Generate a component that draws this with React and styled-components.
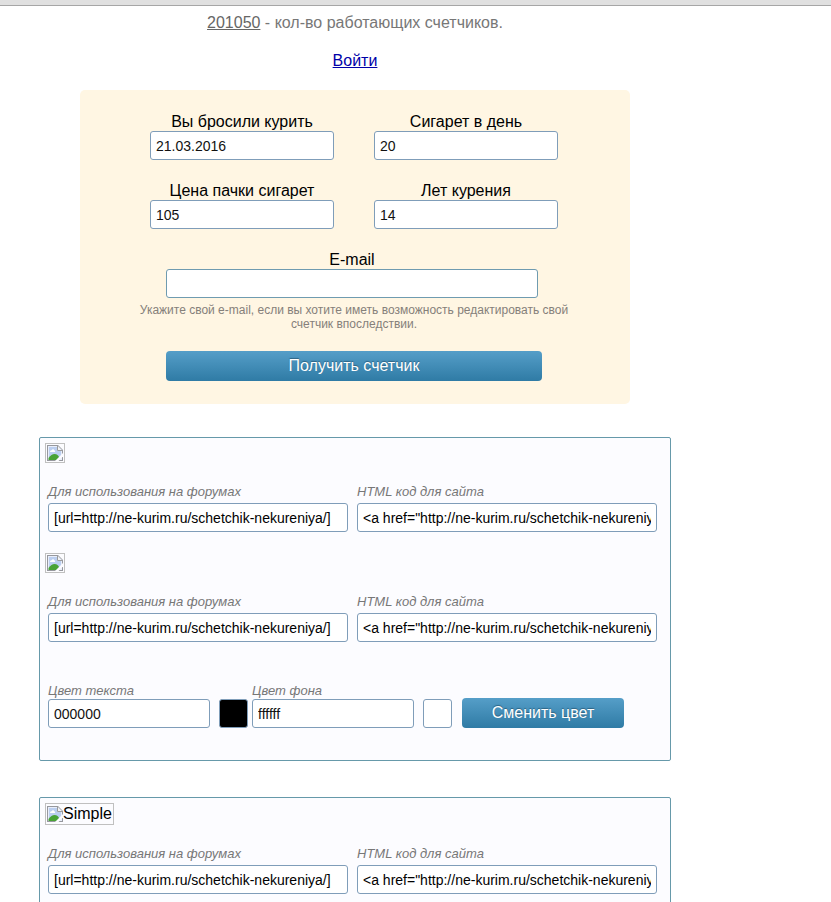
import React from 'react'
import styled, { createGlobalStyle } from 'styled-components'

const FORUM_CODE = '[url=http://ne-kurim.ru/schetchik-nekureniya/]'
const SITE_CODE = '<a href="http://ne-kurim.ru/schetchik-nekureniya/">'

export default function App() {
    return (
        <>
            <GlobalStyle />
            <TopBar />
            <Page>
                <Stats><a href="#counters">201050</a> - кол-во работающих счетчиков.</Stats>
                <Login><a href="#login">Войти</a></Login>
                <CounterForm />
                <Panel>
                    <CodeBlock id="large" />
                    <CodeBlock id="small" />
                    <ColorForm />
                </Panel>
                <Panel>
                    <CodeBlock id="simple" alt="Simple" />
                </Panel>
            </Page>
        </>
    )
}

function CounterForm() {
    return (
        <Card onSubmit={e => e.preventDefault()}>
            <Fields>
                <Field id="quit-date" caption="Вы бросили курить" value="21.03.2016" />
                <Field id="per-day" caption="Сигарет в день" value="20" />
                <Field id="price" caption="Цена пачки сигарет" value="105" />
                <Field id="years" caption="Лет курения" value="14" />
            </Fields>
            <EmailBlock>
                <Label htmlFor="email">E-mail</Label>
                <EmailInput id="email" type="email" />
            </EmailBlock>
            <Hint>Укажите свой e-mail, если вы хотите иметь возможность редактировать свой счетчик впоследствии.</Hint>
            <SubmitButton type="submit">Получить счетчик</SubmitButton>
        </Card>
    )
}

function Field({ id, caption, value }) {
    return (
        <FieldBox>
            <Label htmlFor={id}>{caption}</Label>
            <Input id={id} type="text" defaultValue={value} />
        </FieldBox>
    )
}

function CodeBlock({ id, alt }) {
    return (
        <section>
            <Preview>
                <BrokenImage />
                {alt}
            </Preview>
            <Codes>
                <FieldBox>
                    <SmallLabel $gap="3px" htmlFor={`${id}-forum`}>Для использования на форумах</SmallLabel>
                    <CodeInput id={`${id}-forum`} type="text" readOnly value={FORUM_CODE} />
                </FieldBox>
                <FieldBox>
                    <SmallLabel $gap="3px" htmlFor={`${id}-site`}>HTML код для сайта</SmallLabel>
                    <CodeInput id={`${id}-site`} type="text" readOnly value={SITE_CODE} />
                </FieldBox>
            </Codes>
        </section>
    )
}

function ColorForm() {
    return (
        <Colors onSubmit={e => e.preventDefault()}>
            <ColorField>
                <SmallLabel htmlFor="text-color">Цвет текста</SmallLabel>
                <Input id="text-color" type="text" defaultValue="000000" />
            </ColorField>
            <Swatch type="button" aria-label="Выбрать цвет текста" $color="#000000" />
            <ColorField>
                <SmallLabel htmlFor="back-color">Цвет фона</SmallLabel>
                <Input id="back-color" type="text" defaultValue="ffffff" />
            </ColorField>
            <Swatch type="button" aria-label="Выбрать цвет фона" $color="#ffffff" />
            <ColorButton type="submit">Сменить цвет</ColorButton>
        </Colors>
    )
}

function BrokenImage() {
    return (
        <svg width="16" height="16" viewBox="0 0 16 16" aria-hidden="true">
            <path d="M0 0h11l5 5v11H0z" fill="#96989e" />
            <path d="M1 1h10l4 4v10H1z" fill="#e9eefa" />
            <path d="M2 2h8v4h4v8H2z" fill="#bccff0" />
            <path d="M10 1v5h5z" fill="#f4f4f4" />
            <path d="M10.500 1v4.500H15" fill="none" stroke="#9b9b9b" />
            <path d="M3 7c0-1.500 1-2 1.700-1.800C5 4 7 4 7.200 5.300 8.200 5.300 8.400 6.300 8 7z" fill="#fff" />
            <path d="M1.500 15v-2c2-2.600 4-4 6-4 2.500 0 4 1.500 4.500 3v3z" fill="#49a336" />
            <path d="M8 16l8-8v3.500L11.500 16z" fill="#fcfcff" />
        </svg>
    )
}

const GlobalStyle = createGlobalStyle`
    * {
        box-sizing: border-box;
    }
    body {
        margin: 0;
        background: #fff;
        color: #000;
        font: 16px/18px "Liberation Sans", Arial, sans-serif;
    }
    input, button {
        font-family: inherit;
    }
`

const TopBar = styled.header`
    height: 6px;
    background: #e0e0e0;
    border-bottom: 1px solid #a6a6a6;
`

const Page = styled.main`
    max-width: 831px;
    padding: 8px 160px 0 39px;
`

const Stats = styled.p`
    margin: 0 0 20px;
    text-align: center;
    color: #777;

    a {
        color: #666;
    }
`

const Login = styled.p`
    margin: 0 0 20px;
    text-align: center;

    a {
        color: #0000a8;
    }
`

const Card = styled.form`
    display: flex;
    flex-direction: column;
    align-items: center;
    max-width: 550px;
    margin: 0 auto 33px;
    padding: 23px 52px 23px 50px;
    border-radius: 5px;
    background: #fff6e3;
`

const Fields = styled.div`
    display: grid;
    grid-template-columns: 184px 184px;
    gap: 22px 40px;
    margin-bottom: 22px;
`

const FieldBox = styled.div`
    display: flex;
    flex-direction: column;
    min-width: 0;
`

const Label = styled.label`
    text-align: center;
`

const SmallLabel = styled.label`
    margin-bottom: ${p => p.$gap || 0};
    color: #777;
    font-size: 13px;
    line-height: 16px;
    font-style: italic;
`

const Input = styled.input`
    width: 100%;
    height: 29px;
    padding: 2px 5px;
    border: 1px solid #7f9db9;
    border-radius: 3px;
    background: #fff;
    color: #111;
    font-size: 14px;
`

const CodeInput = styled(Input)`
    color: #000;
`

const EmailBlock = styled(FieldBox)`
    width: 100%;
    max-width: 376px;
    padding-right: 4px;
`

const EmailInput = styled(Input)`
    border-color: #6f9bb0;
`

const Hint = styled.p`
    margin: 5px 0 20px;
    text-align: center;
    color: #85807a;
    font-size: 12px;
    line-height: 14px;
`

const Button = styled.button`
    height: 30px;
    padding: 0;
    border: 0;
    border-radius: 4px;
    background: linear-gradient(#559ec8, #2f7ba5);
    color: #fff;
    font-size: 16px;
    text-shadow: 0 -1px 1px #2d6281;
    cursor: pointer;
`

const SubmitButton = styled(Button)`
    width: 100%;
    max-width: 376px;
`

const Panel = styled.div`
    margin-bottom: 36px;
    padding: 5px 5px 32px;
    border: 1px solid #6699aa;
    border-radius: 2px;
    background: #fcfcff;
`

const Preview = styled.div`
    display: flex;
    align-items: center;
    width: fit-content;
    margin-bottom: 21px;
    padding: 1px;
    border: 1px solid #c0c0c0;
`

const Codes = styled.div`
    display: grid;
    grid-template-columns: repeat(2, minmax(0, 300px));
    gap: 9px;
    padding: 0 3px;
    margin-bottom: 21px;
`

const Colors = styled.form`
    display: flex;
    align-items: flex-end;
    padding: 20px 3px 0;
`

const ColorField = styled(FieldBox)`
    flex: 0 1 162px;
`

const Swatch = styled.button`
    flex: none;
    width: 29px;
    height: 29px;
    margin: 0 4px 0 9px;
    padding: 0;
    border: 1px solid #7f9db9;
    border-radius: 3px;
    background: ${p => p.$color};
`

const ColorButton = styled(Button)`
    flex: 0 1 162px;
    margin-left: 6px;
`
